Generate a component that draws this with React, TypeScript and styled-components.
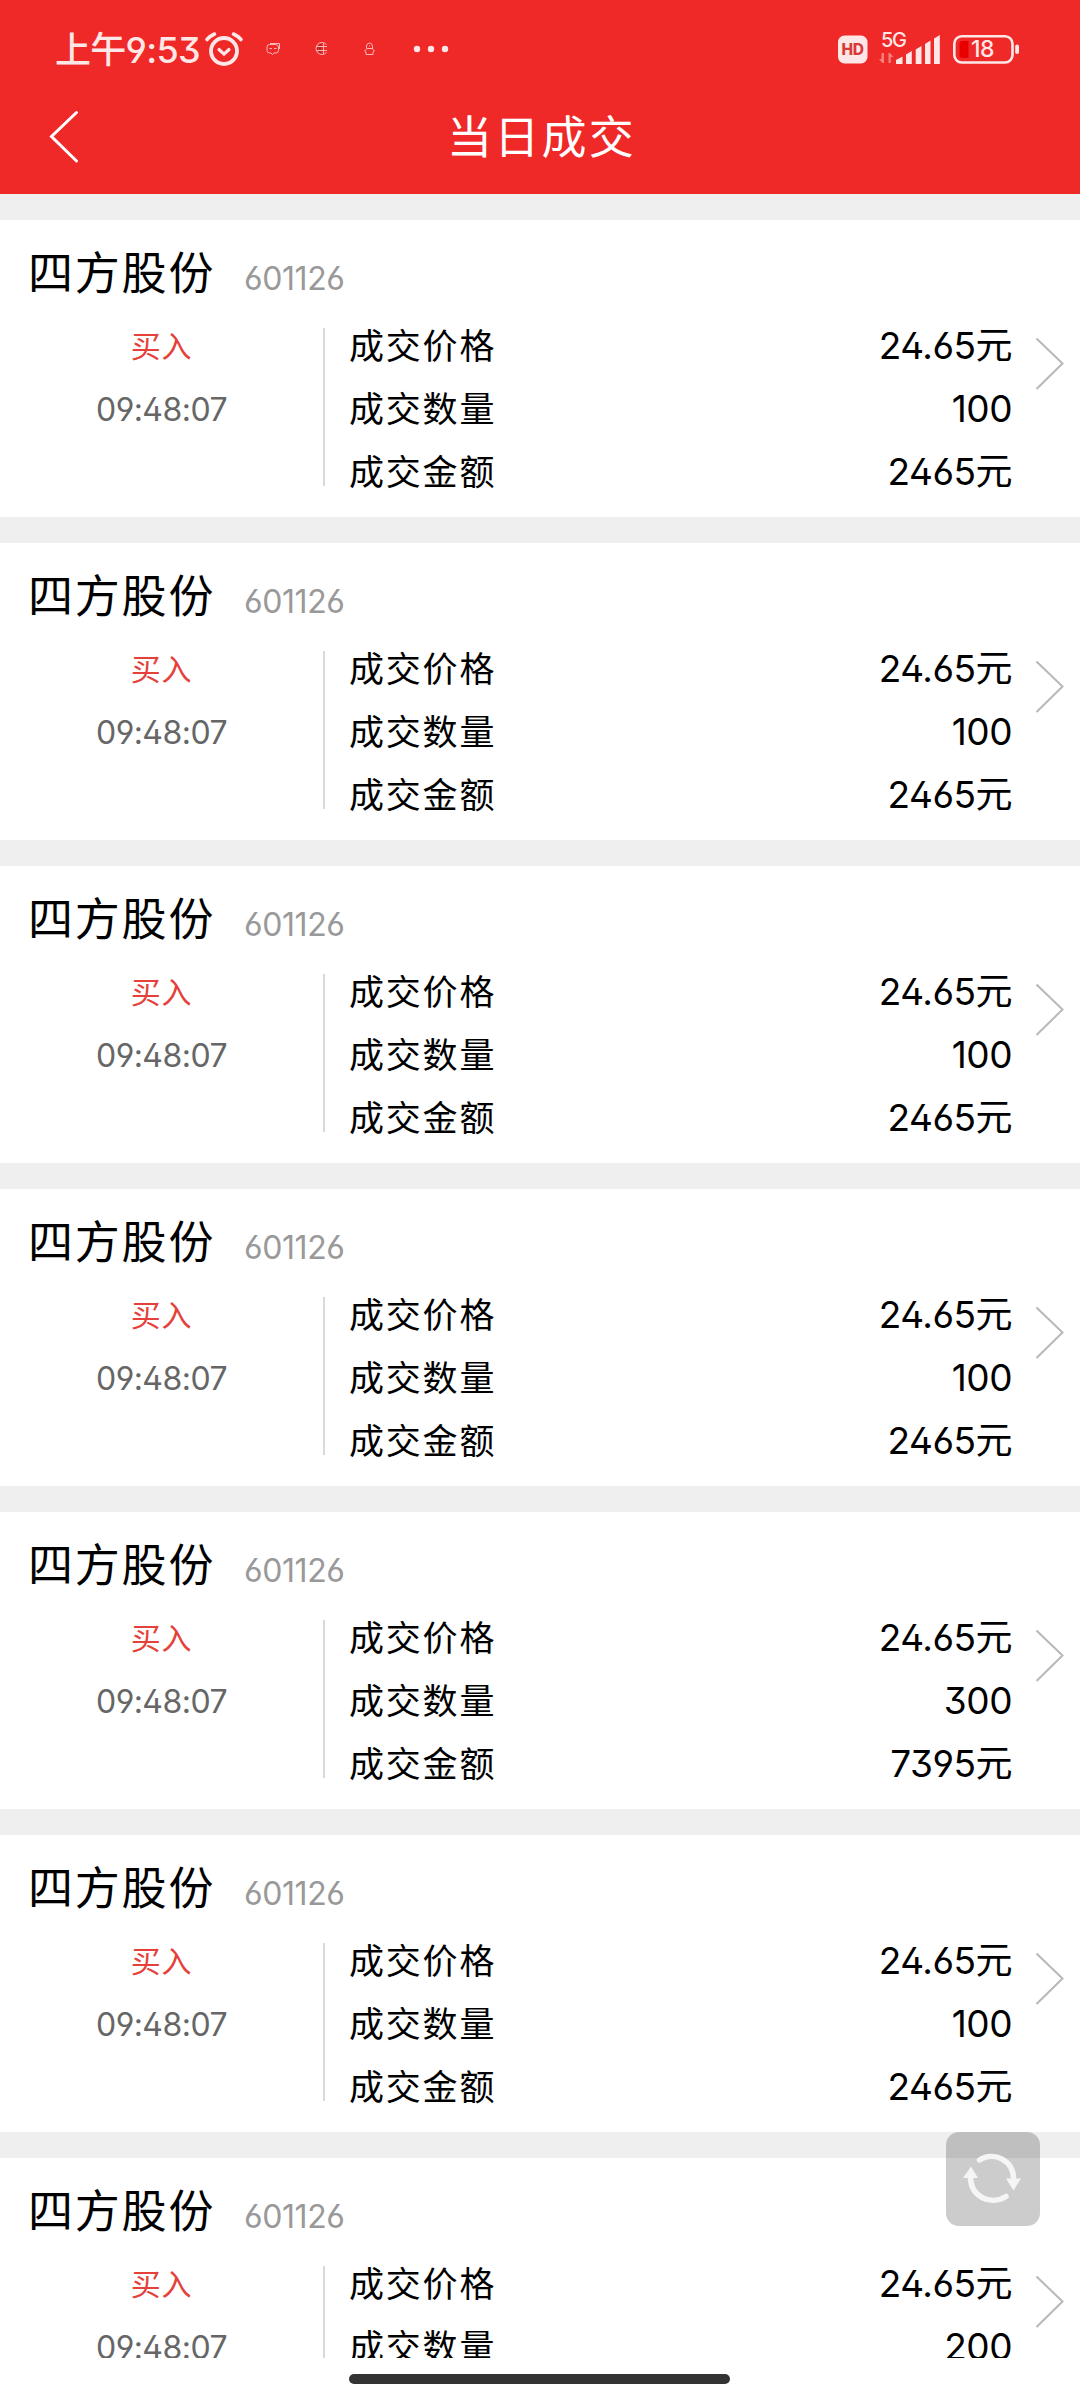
import React from "react";
import styled, { createGlobalStyle } from "styled-components";

const GlobalStyle = createGlobalStyle`
  * { box-sizing: border-box; }
  body { margin: 0; background: #fff; }
`;

const Screen = styled.div`
  display: flex;
  flex-direction: column;
  position: relative;
  width: 1080px;
  height: 2400px;
  overflow: hidden;
  background: #fff;
  color: #000;
  font-family: Inter, "Noto Sans CJK SC", sans-serif;
  font-feature-settings: "ss01", "cv09";
`;

const Header = styled.header`
  flex: none;
  height: 194px;
  background: #ef2828;
`;

const StatusBar = styled.div`
  display: flex;
  justify-content: space-between;
  height: 98px;
  padding: 0 60px 0 55px;
  color: #ffe7e7;
`;

const StatusGroup = styled.div`
  display: flex;
  align-items: center;
`;

const Clock = styled.span`
  width: 149px;
  padding-top: 1px;
  font-size: 36px;
  line-height: 52px;
  font-weight: 500;
  letter-spacing: -0.7px;
  white-space: nowrap;
`;

const TitleBar = styled.div`
  display: grid;
  grid-template-columns: 120px 1fr 120px;
  align-items: center;
  height: 76px;
`;

const BackButton = styled.button`
  display: flex;
  border: 0;
  padding: 0 0 0 46px;
  background: none;
`;

const Title = styled.h1`
  margin: 0;
  padding: 3px 0 0 3px;
  text-align: center;
  color: #fff;
  font-size: 45px;
  line-height: 60px;
  font-weight: 400;
  letter-spacing: 2.3px;
`;

const List = styled.main`
  display: flex;
  flex-direction: column;
  gap: 26px;
  height: 2164px;
  padding-top: 26px;
  overflow: hidden;
  background: #efefef;
`;

const Card = styled.article`
  flex: none;
  height: 297px;
  background: #fff;
`;

const CardHead = styled.div`
  display: flex;
  align-items: baseline;
  height: 108px;
  padding: 24px 0 0 28px;
`;

const StockName = styled.span`
  width: 216px;
  font-size: 45px;
  line-height: 60px;
  letter-spacing: 1.8px;
`;

const StockCode = styled.span`
  color: #999;
  font-size: 32px;
  letter-spacing: -0.4px;
`;

const CardBody = styled.div`
  display: grid;
  grid-template-columns: 323px 1fr 68px;
  grid-template-rows: 158px;
`;

const Side = styled.div`
  display: flex;
  flex-direction: column;
  align-items: center;
`;

const Direction = styled.span`
  height: 63px;
  line-height: 37px;
  color: #e5403a;
  font-size: 30px;
  letter-spacing: 0.7px;
`;

const Time = styled.span`
  line-height: 38px;
  color: #666;
  font-size: 32px;
  letter-spacing: -0.55px;
`;

const Details = styled.dl`
  display: flex;
  flex-direction: column;
  gap: 27px;
  margin: 0;
  padding-left: 24px;
  border-left: 2px solid #d9d9d9;
`;

const DetailRow = styled.div`
  display: flex;
  flex: none;
  justify-content: space-between;
  height: 36px;
  line-height: 36px;
`;

const Label = styled.dt`
  font-size: 35px;
  letter-spacing: 1.8px;
`;

const Value = styled.dd`
  margin: 0;
  font-size: 37px;
  letter-spacing: -0.5px;
`;

const RowArrow = styled.svg`
  margin: 8px 0 0 22px;
`;

const RefreshButton = styled.button`
  position: absolute;
  right: 40px;
  bottom: 174px;
  width: 94px;
  height: 94px;
  padding: 0;
  border: 0;
  border-radius: 13px;
  background: rgba(0, 0, 0, 0.2);
`;

const NavArea = styled.footer`
  display: flex;
  justify-content: center;
  height: 42px;
  padding: 16px 2px 0 0;
`;

const HomeBar = styled.div`
  width: 381px;
  height: 10px;
  border-radius: 5px;
  background: #333;
`;

const TRADES = [
  { qty: "100", amount: "2465元" },
  { qty: "100", amount: "2465元" },
  { qty: "100", amount: "2465元" },
  { qty: "100", amount: "2465元" },
  { qty: "300", amount: "7395元" },
  { qty: "100", amount: "2465元" },
  { qty: "200", amount: "4930元" },
];

const NoticeIcons = () => (
  <svg width="250" height="98" viewBox="204 0 250 98" fill="none" stroke="#ffe7e7">
    <circle cx="224" cy="51" r="13" strokeWidth="3.8" />
    <path d="M207 39.500Q210 36 214.500 34M241 39.500Q238 36 233.500 34" strokeWidth="3.6" strokeLinecap="round" />
    <path d="M219 49.500l5 4.700 5-4.700" strokeWidth="3.2" strokeLinecap="round" strokeLinejoin="round" />
    <g strokeWidth="1" stroke="#f9b8b8">
      <path d="M269.500 44.500h6q3 0 3 2.500v3.500q0 2.500-2.500 2.500h-2l-1.500 1.500-1.500-1.500h-1.500q-2.500 0-2.500-2.500v-3.500q0-2.500 2.500-2.500zM270 43.500h9.500v5.500" />
      <path d="M269.500 48.500h2.500M274 48.500h2.500" />
      <path d="M320 43.500v10.500M317 46v6" stroke="#8f1c1c" />
      <path d="M326.500 44.500A6 6 0 1 0 326.500 52.500M316 46.500h11M316 50.500h11M323.500 43v11" />
      <path d="M366.500 48v-2q.5-3 3-3t3 3v2M366.500 48.500h6.500M367 48.500l-2.500 2.500 1.500 1v2.500h7v-2.500l1.500-1-2.500-2.500M369 46h1" />
    </g>
    <g fill="#ffe7e7" stroke="none">
      <circle cx="417" cy="49" r="3.200" />
      <circle cx="431" cy="49" r="3.200" />
      <circle cx="445" cy="49" r="3.200" />
    </g>
  </svg>
);

const SystemIcons = () => (
  <svg width="184" height="98" viewBox="836 0 184 98" fill="#ffe7e7">
    <rect x="838" y="35.500" width="29.500" height="28" rx="6.500" />
    <text x="852.700" y="55.300" fontSize="15.500" fontWeight="800" textAnchor="middle" fill="#d63a3a" textLength="22.500">HD</text>
    <text x="881" y="47.300" fontSize="20" fontWeight="500" textLength="26">5G</text>
    <path d="M884 53v10h-1.700l-3.300-4h2.500v-6zM888.500 63v-10h1.500l3.500 4h-2.700v6z" opacity="0.450" />
    <path d="M896 64v-4l6.500-3.500v7.500zM906 64v-9.500l5.800-3.500v13zM915.700 64v-14.500l5.800-3.500v18zM925 64v-20l5.500-3.500v23.500zM934 64v-25.500l5.800-3.500v29z" />
    <rect x="954.300" y="36.200" width="58.200" height="26.300" rx="7.500" fill="none" stroke="#ffe7e7" strokeWidth="2.600" />
    <path d="M959.500 44q0-3 3-3h6v17h-6q-3 0-3-3z" fill="#e80000" />
    <rect x="1015.200" y="44.500" width="3.800" height="9.500" rx="1.800" />
    <text x="971" y="57.300" fontSize="23" fontWeight="500" textLength="23.500">18</text>
  </svg>
);

const App = () => (
  <>
    <GlobalStyle />
    <Screen>
      <Header>
        <StatusBar>
          <StatusGroup>
            <Clock>上午9:53</Clock>
            <NoticeIcons />
          </StatusGroup>
          <StatusGroup>
            <SystemIcons />
          </StatusGroup>
        </StatusBar>
        <TitleBar>
          <BackButton aria-label="返回">
            <svg width="34" height="56" viewBox="46 108 34 56" fill="none" stroke="#fff" strokeWidth="3" strokeLinecap="round">
              <path d="M76.500 112.500L51.500 136.500L76.500 161" />
            </svg>
          </BackButton>
          <Title>当日成交</Title>
        </TitleBar>
      </Header>
      <List>
        {TRADES.map((trade, i) => (
          <Card key={i}>
            <CardHead>
              <StockName>四方股份</StockName>
              <StockCode>601126</StockCode>
            </CardHead>
            <CardBody>
              <Side>
                <Direction>买入</Direction>
                <Time>09:48:07</Time>
              </Side>
              <Details>
                <DetailRow>
                  <Label>成交价格</Label>
                  <Value>24.65元</Value>
                </DetailRow>
                <DetailRow>
                  <Label>成交数量</Label>
                  <Value>{trade.qty}</Value>
                </DetailRow>
                <DetailRow>
                  <Label>成交金额</Label>
                  <Value>{trade.amount}</Value>
                </DetailRow>
              </Details>
              <RowArrow width="32" height="56" fill="none" stroke="#b8b8b8" strokeWidth="2">
                <path d="M2.500 2.500L28.500 27.500L2.500 53" />
              </RowArrow>
            </CardBody>
          </Card>
        ))}
      </List>
      <NavArea>
        <HomeBar />
      </NavArea>
      <RefreshButton aria-label="刷新">
        <svg width="94" height="94" viewBox="0 0 94 94" fill="none" stroke="#f5f5f5" strokeWidth="5.500" strokeLinecap="round">
          <path d="M33.500 28C48 19 68 28 67.500 48" />
          <path d="M60 64.500C45 74 24 65 24.500 44" />
          <path d="M60 46.500h15l-7.500 12zM17 46h15l-7-11.500z" fill="#f5f5f5" stroke="none" />
        </svg>
      </RefreshButton>
    </Screen>
  </>
);

export default App;
